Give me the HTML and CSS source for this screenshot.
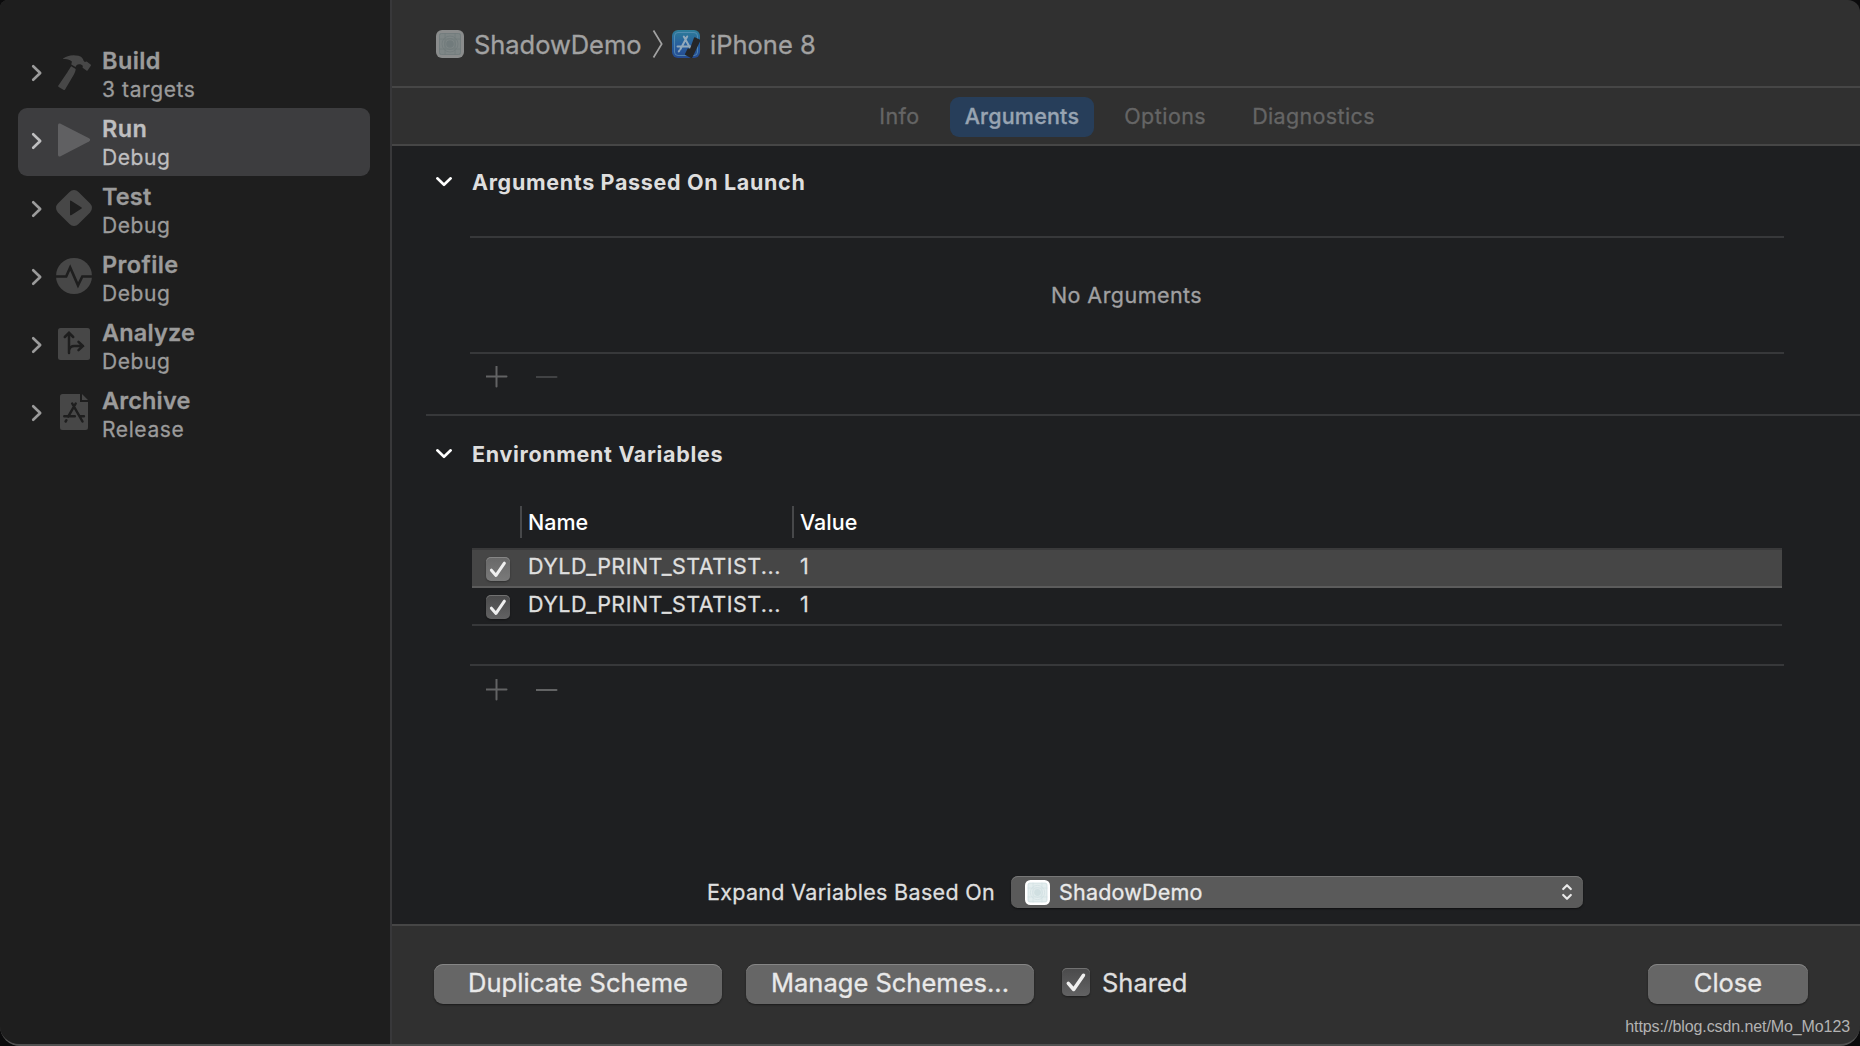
FILE: index.html
```html
<!DOCTYPE html>
<html lang="en">
<head>
<meta charset="utf-8">
<title>Scheme editor</title>
<link rel="stylesheet" href="styles.css">
</head>
<body>
<svg class="defs" width="0" height="0" aria-hidden="true">
  <defs>
    <symbol id="chev-r" viewBox="0 0 12 18"><path d="M2.2 2.2 9.200 9l-7 6.800" fill="none" stroke="currentColor" stroke-width="2.600" stroke-linecap="round" stroke-linejoin="round"/></symbol>
    <symbol id="chev-d" viewBox="0 0 18 12"><path d="M2.300 2.300 9 8.800l6.700-6.500" fill="none" stroke="currentColor" stroke-width="2.600" stroke-linecap="round" stroke-linejoin="round"/></symbol>
    <symbol id="check" viewBox="0 0 24 24"><path d="M5.400 13.200 10 18.400 18.400 6.200" fill="none" stroke="currentColor" stroke-width="3" stroke-linecap="round" stroke-linejoin="round"/></symbol>
    <symbol id="app" viewBox="0 0 28 28">
      <rect width="28" height="28" rx="6" fill="var(--edge)"/>
      <rect x="3" y="3" width="22" height="22" rx="2" fill="var(--face)"/>
      <g fill="none" stroke="var(--grid)" stroke-width=".8"><circle cx="14" cy="14" r="8"/><circle cx="14" cy="14" r="5.500"/><path d="M3 9h22M3 19h22M9 3v22M19 3v22"/><rect x="3.500" y="3.500" width="21" height="21" rx="2"/></g>
      <circle cx="14" cy="14" r="3.800" fill="var(--grid)"/>
    </symbol>
    <symbol id="plus" viewBox="0 0 22 22"><path d="M.5 10.500h20M10.500.5v20" stroke="currentColor" stroke-width="2" stroke-linecap="round"/></symbol>
    <symbol id="minus" viewBox="0 0 22 22"><path d="M.5 11h20" stroke="currentColor" stroke-width="2" stroke-linecap="round"/></symbol>
  </defs>
</svg>
<div class="window">
  <nav class="sidebar">
    <div class="action">
      <svg class="chev"><use href="#chev-r"/></svg>
      <svg class="glyph" viewBox="0 0 36 36"><path d="M7.200 4.600C10.500 1.400 17 .3 22.500 1.800c3 .8 4.700 2.700 5.200 5.200l1.200 1.100 1.800-.7 3.900 3.100c.4.300.5.8.2 1.200l-3.200 4.700c-.3.400-.8.500-1.200.2l-3.800-2.900.2-2-1.800-1.200c-1.700-.6-3.300-.4-4.700.9l-.8 1.500-4.200-2.500.6-2.900c-2-1.900-4.700-2.800-8.300-2.500-.6 0-.8-.2-.4-.4zM15.200 12.300l4.500 2.700c-.1 2.500-1.100 4.200-2.400 6.600L9.100 35.600c-.3.500-.8.600-1.300.3l-5.100-3c-.6-.4-.7-.9-.3-1.400l9-13.200c1.500-2.300 2.300-4 3.800-6z"/></svg>
      <div class="label"><div class="title wide">Build</div><div class="sub">3 targets</div></div>
    </div>
    <div class="action selected">
      <svg class="chev"><use href="#chev-r"/></svg>
      <svg class="glyph" viewBox="0 0 36 36"><path d="M2 3.200C2 1.500 3.200 1 4.600 1.700L33 16.300c1.500.8 1.500 2.400 0 3.200L4.600 34.200c-1.400.7-2.600.1-2.600-1.500z"/></svg>
      <div class="label"><div class="title wide">Run</div><div class="sub">Debug</div></div>
    </div>
    <div class="action">
      <svg class="chev"><use href="#chev-r"/></svg>
      <svg class="glyph" viewBox="0 0 36 36"><path fill-rule="evenodd" d="M13.500 1.900a6.400 6.400 0 0 1 9 0L34.100 13.500a6.400 6.400 0 0 1 0 9L22.500 34.100a6.400 6.400 0 0 1-9 0L1.900 22.500a6.400 6.400 0 0 1 0-9zM14 11.400v13.200c0 .7.500 1 1.100.7l10.200-6.500c.6-.4.6-1.200 0-1.600L15.100 10.700c-.6-.3-1.100 0-1.100.7z"/></svg>
      <div class="label"><div class="title">Test</div><div class="sub">Debug</div></div>
    </div>
    <div class="action">
      <svg class="chev"><use href="#chev-r"/></svg>
      <svg class="glyph" viewBox="0 0 36 36"><circle cx="18" cy="18" r="18"/><path class="cut" d="M0 18.500h10.200L14.200 9.500 22 27.300l4.300-8.800H36" stroke-width="2.600"/></svg>
      <div class="label"><div class="title wide">Profile</div><div class="sub">Debug</div></div>
    </div>
    <div class="action">
      <svg class="chev"><use href="#chev-r"/></svg>
      <svg class="glyph" viewBox="0 0 36 36"><rect x="2" y="2" width="32" height="32" rx="2.500"/><path class="cut" d="M13 27V7.500M8.800 11 13 6.800l4.200 4.200M13 24.500c.5-3 2.500-4.500 5.500-4.500h8.500M22.500 15.800 27 20l-4.500 4.200" stroke-width="2.500" stroke-linecap="round"/></svg>
      <div class="label"><div class="title">Analyze</div><div class="sub">Debug</div></div>
    </div>
    <div class="action">
      <svg class="chev"><use href="#chev-r"/></svg>
      <svg class="glyph" viewBox="0 0 36 36"><path d="M6.500 0H24v8h8v25.500a2.500 2.500 0 0 1-2.500 2.500h-23A2.500 2.500 0 0 1 4 33.500v-31A2.500 2.500 0 0 1 6.500 0zM26 0l6 6h-6z"/><path class="cut" d="M19.700 9.500 12.200 22.700M16.200 9.500 26.500 27.500M8.300 22.300h10.500M24.300 22.300h3.600M10.400 26.200l-.8 1.300" stroke-width="2.500" stroke-linecap="round"/></svg>
      <div class="label"><div class="title">Archive</div><div class="sub">Release</div></div>
    </div>
  </nav>
  <main class="main">
    <header class="crumbs">
      <svg class="app dim"><use href="#app"/></svg>
      <span class="crumb c1">ShadowDemo</span>
      <svg class="sep" viewBox="0 0 12 28"><path d="M1.500.5 9.700 14 1.500 27.500" fill="none" stroke="currentColor" stroke-width="1.700"/></svg>
      <svg class="app" viewBox="0 0 28 28">
        <defs><linearGradient id="sim" x2="0" y2="1"><stop offset="0" stop-color="#2d7d99"/><stop offset=".5" stop-color="#28609d"/><stop offset="1" stop-color="#244a91"/></linearGradient></defs>
        <rect width="28" height="28" rx="6" fill="url(#sim)"/>
        <rect x="2.500" y="2.500" width="23" height="23" rx="3.500" fill="none" stroke="#5b91b5" stroke-width=".8"/>
        <path d="M15.200 6.500 8.500 19M11.800 6.500l7.200 13M5.500 16.500h17M7.600 20.300l-.8 1.200" fill="none" stroke="#91a9bb" stroke-width="2" stroke-linecap="round"/>
        <path d="M21.800 8.200c.3-.8.900-1 1.600-.7l4.200 2c.7.300.9.900.6 1.600L20.500 27.300c-.3.700-.9.900-1.600.6l-5.200-2.600c-.7-.3-.9-.9-.6-1.600l2.600-5.200h2.400z" fill="#252627"/>
      </svg>
      <span class="crumb c2">iPhone 8</span>
    </header>
    <div class="tabs">
      <span class="tab">Info</span>
      <span class="tab active">Arguments</span>
      <span class="tab">Options</span>
      <span class="tab tab-last">Diagnostics</span>
    </div>
    <div class="content">
      <section class="section first">
        <div class="heading"><svg class="chev-d"><use href="#chev-d"/></svg><h2>Arguments Passed On Launch</h2></div>
        <div class="empty"><span>No Arguments</span></div>
        <div class="tools"><svg><use href="#plus"/></svg><svg class="off"><use href="#minus"/></svg></div>
      </section>
      <section class="section second">
        <div class="heading"><svg class="chev-d"><use href="#chev-d"/></svg><h2>Environment Variables</h2></div>
        <div class="table">
          <div class="thead"><span class="th th1">Name</span><span class="th th2">Value</span></div>
          <div class="tr hl"><span class="box"><svg><use href="#check"/></svg></span><span class="name">DYLD_PRINT_STATIST...</span><span class="val">1</span></div>
          <div class="tr"><span class="box"><svg><use href="#check"/></svg></span><span class="name">DYLD_PRINT_STATIST...</span><span class="val">1</span></div>
        </div>
        <div class="tools"><svg><use href="#plus"/></svg><svg><use href="#minus"/></svg></div>
      </section>
      <div class="expand">
        <span class="expand-label">Expand Variables Based On</span>
        <div class="popup">
          <svg class="app bright"><use href="#app"/></svg>
          <span class="popup-text">ShadowDemo</span>
          <svg class="updown" viewBox="0 0 12 18"><path d="M2.200 6 6 2.200 9.800 6M2.200 12 6 15.800 9.800 12" fill="none" stroke="currentColor" stroke-width="2.200" stroke-linecap="round" stroke-linejoin="round"/></svg>
        </div>
      </div>
    </div>
    <footer class="footer">
      <span class="btn b1">Duplicate Scheme</span>
      <span class="btn b2">Manage Schemes...</span>
      <span class="box big"><svg><use href="#check"/></svg></span>
      <span class="shared">Shared</span>
      <span class="btn b3">Close</span>
    </footer>
  </main>
  <span class="watermark">https://blog.csdn.net/Mo_Mo123</span>
</div>
</body>
</html>
```
FILE: styles.css
```css
* { box-sizing: border-box; }
body { margin: 0; background: #0b0b0c; font-family: Inter, "Liberation Sans", sans-serif; -webkit-text-stroke: .3px currentColor; }
svg { display: block; flex: none; }
h2 { margin: 0; }
.defs { position: absolute; }

.window {
  position: relative; display: flex; width: 1860px; height: 1046px; overflow: hidden;
  border-bottom: 2px solid #515151; border-radius: 8px 12px 20px 20px; background: #303030;
}

.sidebar { width: 392px; flex: none; padding: 40px 20px 0 18px; border-right: 2px solid #38383a; background: #1e1e1e; }
.action { display: flex; align-items: flex-start; width: 352px; height: 68px; padding: 0 0 0 12px; color: #9b9b9b; border-radius: 9px; }
.action.selected { background: #3d3d3f; color: #bfbfc0; }
.chev { width: 12px; height: 18px; margin: 24px 13.500px 0 .5px; }
.glyph { width: 36px; height: 36px; margin: 14px 10px 0 0; fill: #474747; }
.selected .glyph { fill: #606062; }
.cut { fill: none; stroke: #1e1e1e; }
.label { padding-top: 6.500px; white-space: nowrap; }
.title { font-size: 23.500px; line-height: 28px; font-weight: 600; letter-spacing: .15px; }
.title.wide { letter-spacing: .4px; }
.sub { font-size: 21px; line-height: 30px; letter-spacing: .6px; }

.main { display: flex; flex-direction: column; flex: 1; min-width: 0; }
.crumbs { display: flex; align-items: center; height: 88px; padding: 0 44px; border-bottom: 2px solid #464646; color: #a2a2a2; font-size: 25.500px; white-space: nowrap; }
.crumbs .app { width: 28px; height: 28px; margin-top: 2px; }
.dim { --edge: #8a8c8c; --face: #7e8686; --grid: #717b7c; }
.bright { --edge: #fff; --face: #e3edee; --grid: #d0dfe1; }
.crumb { line-height: 32px; margin-top: 3px; }
.c1 { margin-left: 10px; width: 178px; letter-spacing: -.05px; }
.c2 { margin-left: 10px; }
.sep { width: 12px; height: 28px; margin: 2px 8px 0 0; }

.tabs { display: flex; align-items: flex-start; justify-content: center; gap: 16px; height: 58px; padding: 9px 0 0 2px; border-bottom: 2px solid #464646; font-size: 21.500px; letter-spacing: .45px; color: #656565; white-space: nowrap; }
.tab { height: 40px; line-height: 38px; padding: 0 14px; border-radius: 9px; }
.tab.active { padding: 0 15px; letter-spacing: .2px; background: #273e5a; color: #98a4b2; font-weight: 500; }
.tab-last { margin-left: 2px; letter-spacing: .35px; }

.content { display: flex; flex-direction: column; height: 778px; background: #1e1f21; color: #dfdfdf; }
.heading { display: flex; align-items: center; padding-left: 43px; white-space: nowrap; }
.heading h2 { margin-left: 19px; font-size: 21.500px; line-height: 30px; font-weight: 700; letter-spacing: .67px; color: #dedede; -webkit-text-stroke: 0; }
.chev-d { width: 18px; height: 12px; color: #fff; margin-top: -1px; }
.first { height: 268px; padding-top: 21px; }
.empty { display: flex; align-items: center; justify-content: center; height: 118px; margin: 39px 76px 0 78px; padding-right: 1px; border: solid #37383a; border-width: 2px 0; font-size: 21.500px; letter-spacing: .45px; color: #a0a0a1; }
.tools { display: flex; gap: 28px; padding: 12px 0 0 94px; color: #626364; }
.tools svg { width: 22px; height: 22px; }
.tools .off { color: #414244; }
.second { margin-left: 34px; border-top: 2px solid #37383a; padding-top: 23px; }
.second .heading { padding-left: 9px; }
.table { margin: 37px 76px 0 44px; height: 160px; border-bottom: 2px solid #37383a; padding: 0 2px; font-size: 21.500px; white-space: nowrap; }
.thead { display: flex; height: 42px; padding-left: 48px; }
.th { height: 32px; line-height: 32px; padding-left: 6px; border-left: 2px solid #47484a; color: #fff; font-weight: 500; -webkit-text-stroke: 0; }
.th1 { width: 272px; }
.tr { display: flex; height: 38px; padding-left: 14px; border-bottom: 2px solid #37383a; line-height: 32px; }
.tr.hl { height: 40px; background: #464646; border-top: 2px solid #3a3a3b; border-bottom-color: #5c5c5c; }
.box { display: block; flex: none; width: 24px; height: 24px; border-radius: 5px; color: #efefef; background: linear-gradient(#4a4a4b, #626263); box-shadow: inset 0 1px #717171, 0 1px 2px #0006; }
.box svg { width: 100%; height: 100%; }
.tr .box { margin: 7px 18px 0 0; }
.hl .box { background: linear-gradient(#686868, #7a7a7a); box-shadow: inset 0 1px #868686, 0 1px 2px #0005; }
.name { width: 272px; letter-spacing: .48px; }
.second .tools { padding: 13px 0 0 60px; }
.expand { display: flex; align-items: center; height: 32px; margin-top: auto; margin-bottom: 16px; padding-left: 315px; white-space: nowrap; font-size: 21.500px; }
.expand-label { width: 304px; letter-spacing: .31px; }
.popup { display: flex; align-items: center; width: 572px; height: 32px; padding: 0 10px 0 14px; border-radius: 7px; background: #5a5a5a; box-shadow: inset 0 1px #777, 0 1px 2px #0008; color: #e9e9e9; }
.popup .app { width: 25px; height: 25px; margin-right: 9px; }
.popup-text { letter-spacing: .2px; }
.updown { width: 12px; height: 18px; margin-left: auto; }

.footer { display: flex; align-items: flex-start; flex: 1; padding: 38px 52px 0 42px; border-top: 2px solid #464646; color: #e9e9e9; font-size: 25.500px; white-space: nowrap; }
.btn { display: flex; justify-content: center; width: 288px; height: 40px; line-height: 38px; border-radius: 9px; background: #666; box-shadow: inset 0 1px #858585, 0 1px 2px #0007; }
.b1 { letter-spacing: .08px; }
.b2 { margin-left: 24px; }
.big { width: 28px; height: 28px; margin: 4px 12px 0 28px; }
.shared { line-height: 38px; color: #dfdfdf; }
.b3 { width: 160px; margin-left: auto; }
.watermark { position: absolute; right: 10px; bottom: 7px; font: 16px/20px "Liberation Sans", Arial, sans-serif; letter-spacing: -.1px; color: #b3b3b3; -webkit-text-stroke: 0; }
```
